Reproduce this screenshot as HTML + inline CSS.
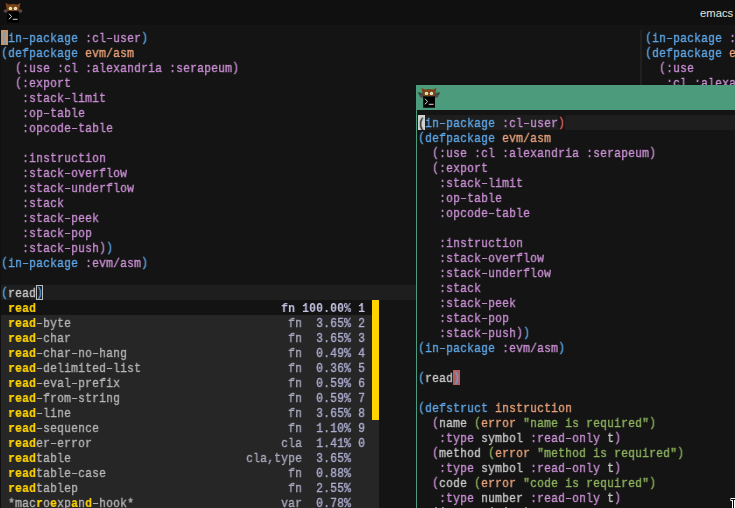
<!DOCTYPE html>
<html><head><meta charset="utf-8"><style>
*{margin:0;padding:0;box-sizing:border-box}
html,body{width:735px;height:508px;overflow:hidden;background:#141414}
body{position:relative;font-family:"Liberation Mono",monospace;font-size:13.33px;line-height:15px;color:#c8c8c8}
.abs{position:absolute}
i{font-style:normal;position:relative;top:-1px}
.ln{position:absolute;white-space:pre;height:15px;padding-top:1px;transform-origin:0 0;transform:scaleX(0.8752);-webkit-text-stroke:0.35px currentColor;will-change:transform}
.b{color:#5ea6e6} .p{color:#c98fd3} .o{color:#e8a27a} .g{color:#8db35e} .f{color:#c8c8c8}
.y{color:#ffd400;font-weight:bold;-webkit-text-stroke-width:0.15px} .r{color:#b6b6b6} .k{color:#a8a8bc} .n{color:#adadd0}
.sel .r,.sel .k,.sel .n{font-weight:bold;color:#c4c4e4;-webkit-text-stroke-width:0}
</style></head><body>
<div class="abs" style="left:0;top:0;width:735px;height:25px;background:#101010"></div>
<svg class="abs" style="left:0px;top:0px" width="25" height="24" viewBox="0 0 25 24">
<path d="M2 7 L6.8 8.2 L7.6 10.4 L3 10.2 Z" fill="rgba(30,15,5,0.55)"/>
<path d="M24 7 L19.2 8.2 L18.4 10.4 L23 10.2 Z" fill="rgba(30,15,5,0.55)"/>
<ellipse cx="6.2" cy="11" rx="2.7" ry="1.8" fill="#5a4646"/>
<ellipse cx="19.8" cy="11" rx="2.7" ry="1.8" fill="#5a4646"/>
<path d="M5.6 3 Q6.8 3.3 8.6 4.4 Q13 3.5 17.4 4.4 Q19.2 3.3 20.4 3 L19.9 6.5 L18.9 9.9 Q17 11.1 13 11.1 Q9 11.1 7.1 9.9 L6.1 6.5 Z" fill="#7a4318"/>
<circle cx="10.5" cy="8.4" r="1.7" fill="#f0f0d8"/><circle cx="15.5" cy="8.4" r="1.7" fill="#f0f0d8"/>
<circle cx="10.5" cy="8.4" r="0.7" fill="#d0d858"/><circle cx="15.5" cy="8.4" r="0.7" fill="#d0d858"/>
<rect x="7.2" y="11.2" width="11.8" height="11.6" rx="0.5" fill="#000"/>
<path d="M9 13.7 L11.5 16.5 L9 19.3" stroke="#d8d8d8" stroke-width="1" fill="none"/>
<rect x="12.8" y="18.8" width="4.8" height="1" fill="#d8d8d8"/>
</svg>
<div class="abs" style="left:700px;top:6px;font-family:'Liberation Sans',sans-serif;font-size:11.3px;line-height:15px;color:#e6e6da">emacs</div>
<div class="abs" style="left:0;top:25px;width:1px;height:483px;background:#101010"></div>
<div class="abs" style="left:1px;top:285px;width:639px;height:15px;background:#1e1e1e"></div>
<div class="abs" style="left:640px;top:30px;width:2px;height:478px;background:#202020"></div>
<div class="abs" style="left:1px;top:30px;width:7px;height:15px;background:#c4966a"></div>
<div class="ln" style="left:1px;top:30px"><span class="b"><i>(</i>in–package </span><span class="p">:cl–user</span><span class="b"><i>)</i></span></div>
<div class="ln" style="left:1px;top:45px"><span class="b"><i>(</i>defpackage </span><span class="o">evm/asm</span></div>
<div class="ln" style="left:1px;top:60px">  <span class="p"><i>(</i>:use :cl :alexandria :serapeum<i>)</i></span></div>
<div class="ln" style="left:1px;top:75px">  <span class="p"><i>(</i>:export</span></div>
<div class="ln" style="left:1px;top:90px">   <span class="p">:stack–limit</span></div>
<div class="ln" style="left:1px;top:105px">   <span class="p">:op–table</span></div>
<div class="ln" style="left:1px;top:120px">   <span class="p">:opcode–table</span></div>
<div class="ln" style="left:1px;top:150px">   <span class="p">:instruction</span></div>
<div class="ln" style="left:1px;top:165px">   <span class="p">:stack–overflow</span></div>
<div class="ln" style="left:1px;top:180px">   <span class="p">:stack–underflow</span></div>
<div class="ln" style="left:1px;top:195px">   <span class="p">:stack</span></div>
<div class="ln" style="left:1px;top:210px">   <span class="p">:stack–peek</span></div>
<div class="ln" style="left:1px;top:225px">   <span class="p">:stack–pop</span></div>
<div class="ln" style="left:1px;top:240px">   <span class="p">:stack–push</span><span class="p"><i>)</i></span><span class="b"><i>)</i></span></div>
<div class="ln" style="left:1px;top:255px"><span class="b"><i>(</i>in–package </span><span class="p">:evm/asm</span><span class="b"><i>)</i></span></div>
<div class="ln" style="left:1px;top:285px"><span class="b"><i>(</i></span><span class="f">read</span><span class="b"><i>)</i></span></div>
<div class="abs" style="left:36px;top:285px;width:7px;height:15px;border:1px solid #c0c0c0"></div>
<div class="ln" style="left:645px;top:30px"><span class="b"><i>(</i>in–package </span><span class="p">:cl–user<i>)</i></span></div>
<div class="ln" style="left:645px;top:45px"><span class="b"><i>(</i>defpackage </span><span class="o">evm/asm</span></div>
<div class="ln" style="left:645px;top:60px">  <span class="p"><i>(</i>:use</span></div>
<div class="ln" style="left:645px;top:75px">   <span class="p">:cl :alexandria</span></div>
<div class="abs" style="left:1px;top:300px;width:378px;height:208px;background:#262626"></div>
<div class="abs" style="left:1px;top:300px;width:371px;height:15px;background:#131313"></div>
<div class="abs" style="left:372px;top:300px;width:7px;height:120px;background:#ffd400"></div>
<div class="ln sel" style="left:8px;top:300px"><span class="y">read</span><span class="r"></span>                                   <span class="k">fn</span><span class="n"> 100.00%</span><span class="n"> 1</span></div>
<div class="ln" style="left:8px;top:315px"><span class="y">read</span><span class="r">–byte</span>                               <span class="k">fn</span><span class="n">  3.65%</span><span class="n"> 2</span></div>
<div class="ln" style="left:8px;top:330px"><span class="y">read</span><span class="r">–char</span>                               <span class="k">fn</span><span class="n">  3.65%</span><span class="n"> 3</span></div>
<div class="ln" style="left:8px;top:345px"><span class="y">read</span><span class="r">–char–no–hang</span>                       <span class="k">fn</span><span class="n">  0.49%</span><span class="n"> 4</span></div>
<div class="ln" style="left:8px;top:360px"><span class="y">read</span><span class="r">–delimited–list</span>                     <span class="k">fn</span><span class="n">  0.36%</span><span class="n"> 5</span></div>
<div class="ln" style="left:8px;top:375px"><span class="y">read</span><span class="r">–eval–prefix</span>                        <span class="k">fn</span><span class="n">  0.59%</span><span class="n"> 6</span></div>
<div class="ln" style="left:8px;top:390px"><span class="y">read</span><span class="r">–from–string</span>                        <span class="k">fn</span><span class="n">  0.59%</span><span class="n"> 7</span></div>
<div class="ln" style="left:8px;top:405px"><span class="y">read</span><span class="r">–line</span>                               <span class="k">fn</span><span class="n">  3.65%</span><span class="n"> 8</span></div>
<div class="ln" style="left:8px;top:420px"><span class="y">read</span><span class="r">–sequence</span>                           <span class="k">fn</span><span class="n">  1.10%</span><span class="n"> 9</span></div>
<div class="ln" style="left:8px;top:435px"><span class="y">read</span><span class="r">er–error</span>                           <span class="k">cla</span><span class="n">  1.41%</span><span class="n"> 0</span></div>
<div class="ln" style="left:8px;top:450px"><span class="y">read</span><span class="r">table</span>                         <span class="k">cla,type</span><span class="n">  3.65%</span></div>
<div class="ln" style="left:8px;top:465px"><span class="y">read</span><span class="r">table–case</span>                          <span class="k">fn</span><span class="n">  0.88%</span></div>
<div class="ln" style="left:8px;top:480px"><span class="y">read</span><span class="r">tablep</span>                              <span class="k">fn</span><span class="n">  2.55%</span></div>
<div class="ln" style="left:8px;top:495px"><span class="r">*mac</span><span class="y">r</span><span class="r">o</span><span class="y">e</span><span class="r">xp</span><span class="y">a</span><span class="r">n</span><span class="y">d</span><span class="r">–hook*</span>                     <span class="k">var</span><span class="n">  0.78%</span></div>
<div class="abs" style="left:416px;top:85px;width:319px;height:423px;background:#141414"></div>
<div class="abs" style="left:416px;top:85px;width:319px;height:25px;background:#4d9b7d"></div>
<div class="abs" style="left:416px;top:85px;width:1px;height:423px;background:#4d9b7d"></div>
<svg class="abs" style="left:416px;top:85px" width="25" height="24" viewBox="0 0 25 24">
<path d="M2 7 L6.8 8.2 L7.6 10.4 L3 10.2 Z" fill="rgba(30,15,5,0.55)"/>
<path d="M24 7 L19.2 8.2 L18.4 10.4 L23 10.2 Z" fill="rgba(30,15,5,0.55)"/>
<ellipse cx="6.2" cy="11" rx="2.7" ry="1.8" fill="#5a4646"/>
<ellipse cx="19.8" cy="11" rx="2.7" ry="1.8" fill="#5a4646"/>
<path d="M5.6 3 Q6.8 3.3 8.6 4.4 Q13 3.5 17.4 4.4 Q19.2 3.3 20.4 3 L19.9 6.5 L18.9 9.9 Q17 11.1 13 11.1 Q9 11.1 7.1 9.9 L6.1 6.5 Z" fill="#7a4318"/>
<circle cx="10.5" cy="8.4" r="1.7" fill="#f0f0d8"/><circle cx="15.5" cy="8.4" r="1.7" fill="#f0f0d8"/>
<circle cx="10.5" cy="8.4" r="0.7" fill="#d0d858"/><circle cx="15.5" cy="8.4" r="0.7" fill="#d0d858"/>
<rect x="7.2" y="11.2" width="11.8" height="11.6" rx="0.5" fill="#000"/>
<path d="M9 13.7 L11.5 16.5 L9 19.3" stroke="#d8d8d8" stroke-width="1" fill="none"/>
<rect x="12.8" y="18.8" width="4.8" height="1" fill="#d8d8d8"/>
</svg>
<div class="abs" style="left:417px;top:115px;width:318px;height:15px;background:#1e1e1e"></div>
<div class="abs" style="left:418px;top:115px;width:7px;height:15px;background:#d0d0d0"></div>
<div class="abs" style="left:453px;top:370px;width:7px;height:15px;background:#b85c5c"></div>
<div class="ln" style="left:418px;top:115px"><i>(</i><span class="b">in–package </span><span class="p">:cl–user</span><span class="red"><i>)</i></span></div>
<div class="ln" style="left:418px;top:130px"><span class="b"><i>(</i>defpackage </span><span class="o">evm/asm</span></div>
<div class="ln" style="left:418px;top:145px">  <span class="p"><i>(</i>:use :cl :alexandria :serapeum<i>)</i></span></div>
<div class="ln" style="left:418px;top:160px">  <span class="p"><i>(</i>:export</span></div>
<div class="ln" style="left:418px;top:175px">   <span class="p">:stack–limit</span></div>
<div class="ln" style="left:418px;top:190px">   <span class="p">:op–table</span></div>
<div class="ln" style="left:418px;top:205px">   <span class="p">:opcode–table</span></div>
<div class="ln" style="left:418px;top:235px">   <span class="p">:instruction</span></div>
<div class="ln" style="left:418px;top:250px">   <span class="p">:stack–overflow</span></div>
<div class="ln" style="left:418px;top:265px">   <span class="p">:stack–underflow</span></div>
<div class="ln" style="left:418px;top:280px">   <span class="p">:stack</span></div>
<div class="ln" style="left:418px;top:295px">   <span class="p">:stack–peek</span></div>
<div class="ln" style="left:418px;top:310px">   <span class="p">:stack–pop</span></div>
<div class="ln" style="left:418px;top:325px">   <span class="p">:stack–push</span><span class="p"><i>)</i></span><span class="b"><i>)</i></span></div>
<div class="ln" style="left:418px;top:340px"><span class="b"><i>(</i>in–package </span><span class="p">:evm/asm</span><span class="b"><i>)</i></span></div>
<div class="ln" style="left:418px;top:370px"><span class="b"><i>(</i></span><span class="f">read</span><span class="b"><i>)</i></span></div>
<div class="ln" style="left:418px;top:400px"><span class="b"><i>(</i>defstruct </span><span class="o">instruction</span></div>
<div class="ln" style="left:418px;top:415px">  <span class="p"><i>(</i></span><span class="f">name </span><span class="g"><i>(</i></span><span class="o">error </span><span class="g">"name is required"<i>)</i></span></div>
<div class="ln" style="left:418px;top:430px">   <span class="p">:type </span><span class="f">symbol </span><span class="p">:read–only </span><span class="f">t</span><span class="p"><i>)</i></span></div>
<div class="ln" style="left:418px;top:445px">  <span class="p"><i>(</i></span><span class="f">method </span><span class="g"><i>(</i></span><span class="o">error </span><span class="g">"method is required"<i>)</i></span></div>
<div class="ln" style="left:418px;top:460px">   <span class="p">:type </span><span class="f">symbol </span><span class="p">:read–only </span><span class="f">t</span><span class="p"><i>)</i></span></div>
<div class="ln" style="left:418px;top:475px">  <span class="p"><i>(</i></span><span class="f">code </span><span class="g"><i>(</i></span><span class="o">error </span><span class="g">"code is required"<i>)</i></span></div>
<div class="ln" style="left:418px;top:490px">   <span class="p">:type </span><span class="f">number </span><span class="p">:read–only </span><span class="f">t</span><span class="p"><i>)</i></span></div>
<style>.red{color:#f06464}</style>
<div class="ln" style="left:418px;top:115px;color:#111">(</div>
<div class="abs" style="left:558px;top:115px;width:7px;height:15px;background:#161616"></div>
<div class="ln" style="left:558px;top:115px"><span class="red"><i>)</i></span></div>
<svg class="abs" style="left:0;top:0" width="735" height="508"><path d="M730.5 499.5 Q731 499.5 735 499.5 M733.5 499.5 L733.5 508" stroke="#fff" stroke-width="3" fill="none"/><path d="M731 499.5 L735 499.5 M733.5 500 L733.5 508" stroke="#000" stroke-width="1" fill="none"/></svg>
<div class="abs" style="left:435px;top:507px;width:2px;height:1px;background:#a070b0"></div>
<div class="abs" style="left:442px;top:507px;width:2px;height:1px;background:#909090"></div>
<div class="abs" style="left:491px;top:507px;width:2px;height:1px;background:#6c8a50"></div>
<div class="abs" style="left:505px;top:507px;width:2px;height:1px;background:#909090"></div>
<div class="abs" style="left:525px;top:507px;width:2px;height:1px;background:#6c8a50"></div>
</body></html>
